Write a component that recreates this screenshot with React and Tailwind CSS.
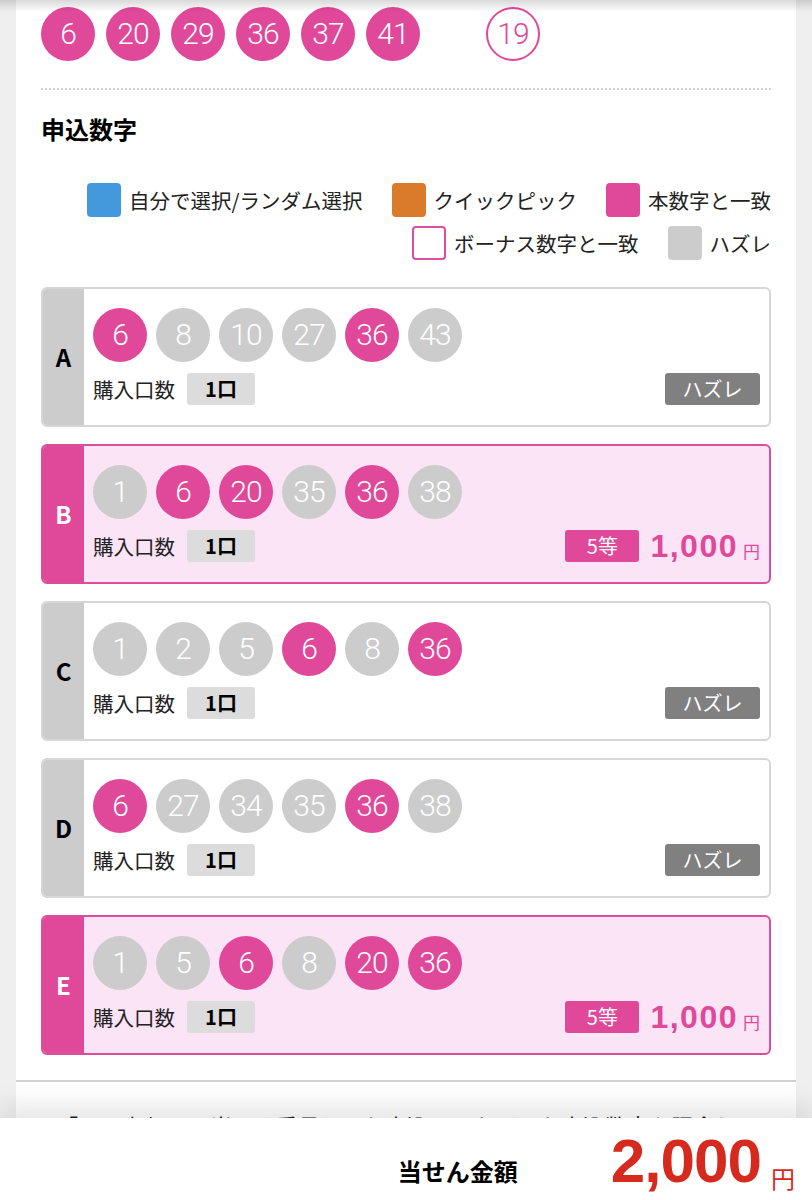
// 当せん結果 - 申込数字ごとの照合カード
import React from 'react';

const WIN_NUMBERS = [6, 20, 29, 36, 37, 41];
const BONUS = 19;

const tickets = [
  { label: 'A', nums: [6, 8, 10, 27, 36, 43], prize: null },
  { label: 'B', nums: [1, 6, 20, 35, 36, 38], prize: { rank: '5等', amount: '1,000' } },
  { label: 'C', nums: [1, 2, 5, 6, 8, 36], prize: null },
  { label: 'D', nums: [6, 27, 34, 35, 36, 38], prize: null },
  { label: 'E', nums: [1, 5, 6, 8, 20, 36], prize: { rank: '5等', amount: '1,000' } },
];

const legend = [
  [
    { box: 'bg-[#4499dd]', text: '自分で選択/ランダム選択' },
    { box: 'bg-[#d97b2b]', text: 'クイックピック' },
    { box: 'bg-[#e0489a]', text: '本数字と一致' },
  ],
  [
    { box: 'bg-white border-2 border-[#dc4f9c]', text: 'ボーナス数字と一致' },
    { box: 'bg-[#cccccc]', text: 'ハズレ' },
  ],
];

// 数字ボール
const Ball = ({ n, variant }) => {
  const styles = {
    hit: 'bg-[#e0489a] text-white',
    miss: 'bg-[#cccccc] text-white',
    bonus: 'bg-white text-[#e0489a] border-2 border-[#e0489a]',
  };
  return (
    <div
      className={`w-[54px] h-[54px] rounded-full flex items-center justify-center shrink-0 font-['Roboto',sans-serif] font-light text-[30px] leading-none tracking-[-1px] ${styles[variant]}`}
    >
      {n}
    </div>
  );
};

const TicketCard = ({ label, nums, prize }) => {
  const win = !!prize;
  return (
    <div
      className={`flex h-[140px] rounded-[6px] border-2 overflow-hidden ${
        win ? 'border-[#d94f98] bg-[#fbe4f6]' : 'border-[#d6d6d6] bg-white'
      }`}
    >
      <div
        className={`w-[41px] shrink-0 flex items-center justify-center text-[24px] font-bold ${
          win ? 'bg-[#e0489a] text-white' : 'bg-[#cccccc] text-black'
        }`}
      >
        {label}
      </div>
      <div className="flex-1 pl-[9px] pr-[9px] pt-[19px]">
        <div className="flex gap-[9px]">
          {nums.map((n) => (
            <Ball key={n} n={n} variant={WIN_NUMBERS.includes(n) ? 'hit' : 'miss'} />
          ))}
        </div>
        <div className="mt-[11px] flex items-center justify-between">
          <div className="flex items-center">
            <span className="text-[20.5px] text-[#222]">購入口数</span>
            <span className="ml-[12px] w-[68px] h-[32px] rounded-[3px] bg-[#dcdcdc] flex items-center justify-center text-[20px] font-bold text-black">
              1口
            </span>
          </div>
          {win ? (
            <div className="flex items-center">
              <span className="w-[74px] h-[32px] rounded-[3px] bg-[#e0489a] text-white text-[20px] flex items-center justify-center">
                {prize.rank}
              </span>
              <span className="ml-[11px] font-['Liberation_Sans',sans-serif] font-bold text-[32px] text-[#e0489a] leading-none tracking-[1.5px]">
                {prize.amount}
              </span>
              <span className="ml-[5px] mt-[8px] text-[17px] text-[#e0489a] leading-none">円</span>
            </div>
          ) : (
            <span className="w-[95px] h-[32px] rounded-[3px] bg-[#808080] text-white text-[20px] flex items-center justify-center">
              ハズレ
            </span>
          )}
        </div>
      </div>
    </div>
  );
};

export default function App() {
  return (
    <div className="relative h-[1200px] overflow-hidden bg-[#efefef] font-['Noto_Sans_CJK_JP',sans-serif] text-[#111]">
      {/* 上部ヘッダーの影 */}
      <div className="absolute top-0 inset-x-0 h-[12px] bg-linear-to-b from-black/15 to-transparent z-10" />

      <div className="mx-4 bg-white min-h-[1200px]">
        <div className="px-[25px] pt-[7px]">
          {/* 当せん番号 */}
          <div className="flex items-center">
            <div className="flex gap-[11px]">
              {WIN_NUMBERS.map((n) => (
                <Ball key={n} n={n} variant="hit" />
              ))}
            </div>
            <div className="ml-[66px]">
              <Ball n={BONUS} variant="bonus" />
            </div>
          </div>

          <div className="mt-[27px] border-t-2 border-dotted border-[#cfcfcf]" />

          <h2 className="mt-[21px] text-[24px] leading-[36px] font-bold text-black">申込数字</h2>

          {/* 凡例 */}
          <div className="mt-[36px] flex flex-col gap-[9px]">
            {legend.map((row, i) => (
              <div key={i} className="flex justify-end gap-[29px]">
                {row.map((item) => (
                  <div key={item.text} className="flex items-center gap-[8px]">
                    <span className={`w-[34px] h-[34px] rounded-[4px] ${item.box}`} />
                    <span className="text-[20.5px] text-[#222]">{item.text}</span>
                  </div>
                ))}
              </div>
            ))}
          </div>

          {/* 申込カード */}
          <div className="mt-[27px] flex flex-col gap-[17px]">
            {tickets.map((t) => (
              <TicketCard key={t.label} {...t} />
            ))}
          </div>
        </div>

        <div className="mt-[25px] border-t-2 border-[#d0d0d0] px-[40px] pt-[26px]">
          <p className="text-[22px] text-[#222] leading-[34px]">
            「画面上部」の当せん番号と、お申込みいただいた申込数字を照合した結果です。
          </p>
        </div>
      </div>

      {/* 当せん金額バー */}
      <div className="absolute bottom-0 inset-x-0 h-[82px] bg-white shadow-[0_-12px_24px_rgba(0,0,0,0.10)] z-10 flex items-end justify-end pr-[17px] pb-[8px]">
        <span className="text-[24px] font-bold text-black mb-[3px]">当せん金額</span>
        <span className="ml-[93px] font-['Liberation_Sans',sans-serif] font-bold text-[62px] leading-none text-[#d62a1e] tracking-[-1px]">
          2,000
        </span>
        <span className="ml-[10px] mb-[2px] text-[24px] leading-none text-[#d62a1e]">円</span>
      </div>
    </div>
  );
}
